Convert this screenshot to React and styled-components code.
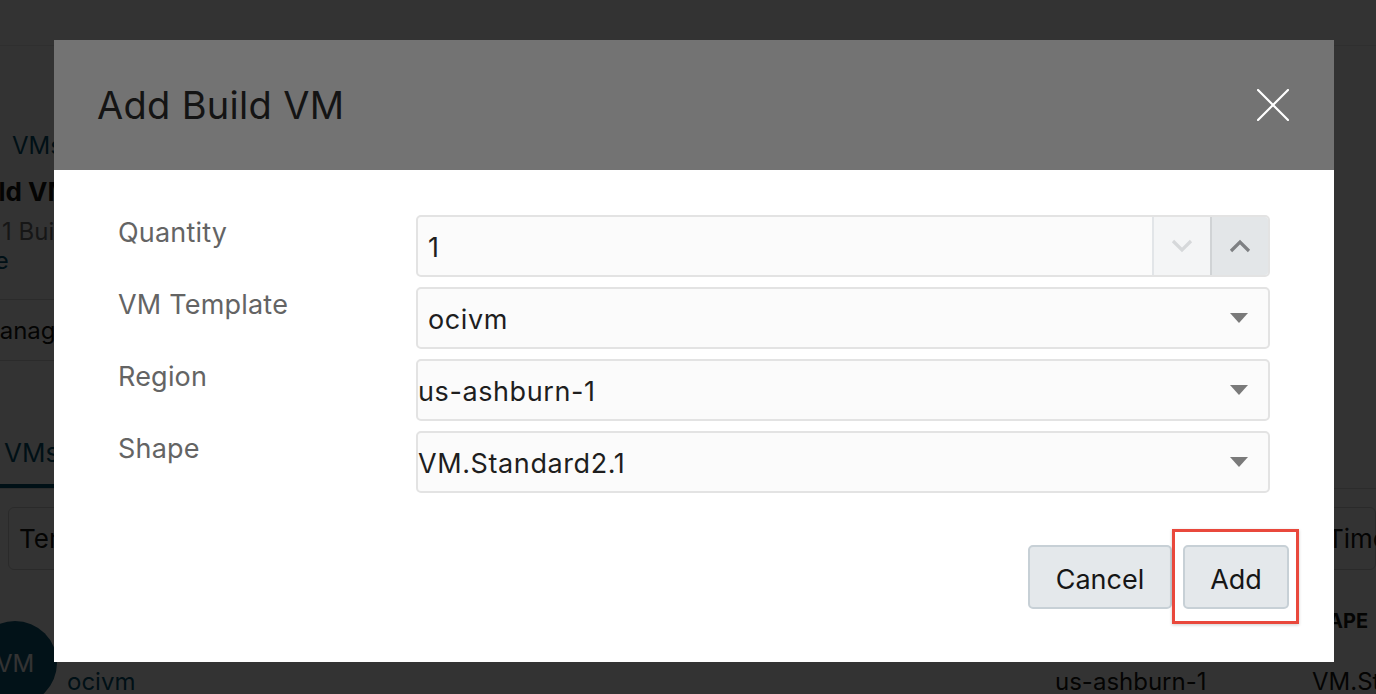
import React from "react";
import styled, { createGlobalStyle } from "styled-components";

const GlobalStyle = createGlobalStyle`
  html, body {
    margin: 0;
    padding: 0;
    width: 1376px;
    height: 694px;
    overflow: hidden;
    background: #ffffff;
    font-family: Inter, "Noto Sans", "Liberation Sans", sans-serif;
  }
  * { box-sizing: border-box; }
`;

/* ---------- page behind the dialog ---------- */

const Page = styled.div`
  position: relative;
  width: 1376px;
  height: 694px;
  overflow: hidden;
  background: #ffffff;
  color: #161513;
`;

const TopBar = styled.div`
  height: 46px;
  border-bottom: 1px solid #e8e8e8;
  overflow: hidden;
`;

const PageTitle = styled.div`
  font-size: 44px;
  line-height: 48px;
  margin-top: -45px;
  margin-left: -160px;
`;

const Side = styled.div`
  display: flex;
  flex-direction: column;
  width: 300px;
`;

const Crumb = styled.div`
  color: #04536f;
  font-size: 24px;
  line-height: 30px;
  margin: 85px 0 0 12px;
  white-space: nowrap;
`;

const SideHeading = styled.div`
  font-size: 26px;
  font-weight: 700;
  line-height: 30px;
  margin: 16px 0 0 -42px;
  white-space: nowrap;
`;

const SideText = styled.div`
  font-size: 24px;
  line-height: 30px;
  margin: 10px 0 0 2px;
  color: #6f6f6f;
  white-space: nowrap;
`;

const SideLink = styled.div`
  font-size: 24px;
  line-height: 28px;
  margin: 0 0 0 -50px;
  color: #04536f;
  white-space: nowrap;
`;

const SideBlock = styled.div`
  margin-top: 24px;
  border-top: 1px solid #d8d8d8;
  border-bottom: 1px solid #d8d8d8;
  height: 62px;
  display: flex;
  align-items: center;
  font-size: 24px;
  margin-left: -22px;
  white-space: nowrap;
  width: 400px;
`;

const Tabs = styled.div`
  margin-top: 76px;
  display: flex;
  border-bottom: 1px solid #dddddd;
  width: 1376px;
`;

const Tab = styled.div`
  color: #04536f;
  font-size: 26px;
  padding: 0 0 16px 4px;
  border-bottom: 4px solid #04536f;
  width: 60px;
  white-space: nowrap;
  overflow: hidden;
`;

const Toolbar = styled.div`
  display: flex;
  justify-content: space-between;
  padding: 18px 0 0 8px;
  width: 1376px;
`;

const FilterBox = styled.div`
  height: 63px;
  border: 1px solid #d0d0d0;
  border-radius: 6px;
  display: flex;
  align-items: center;
  padding: 0 10px;
  font-size: 26px;
  width: ${(p) => p.$w}px;
  white-space: nowrap;
`;

const TableHead = styled.div`
  display: flex;
  justify-content: flex-end;
  font-size: 20px;
  font-weight: 700;
  line-height: 24px;
  margin-top: 39px;
  width: 1376px;
  span {
    width: 64px;
    white-space: nowrap;
    overflow: hidden;
    text-indent: -12px;
  }
`;

const TableRow = styled.div`
  display: flex;
  align-items: flex-start;
  margin-top: -12px;
  width: 1376px;
  font-size: 24px;
`;

const Avatar = styled.div`
  width: 84px;
  height: 84px;
  border-radius: 50%;
  margin-left: -27px;
  background: #0e5a78;
  color: #ffffff;
  display: flex;
  align-items: center;
  justify-content: center;
  font-size: 24px;
  flex: none;
`;

const RowName = styled.div`
  color: #04536f;
  margin-left: 10px;
  margin-top: 46px;
  flex: 1;
`;

const RowCell = styled.div`
  margin-top: 46px;
  width: ${(p) => p.$w}px;
  white-space: nowrap;
  overflow: hidden;
`;

/* ---------- overlay + dialog ---------- */

const Backdrop = styled.div`
  position: absolute;
  inset: 0;
  background: rgba(0, 0, 0, 0.8);
`;

const Dialog = styled.div`
  position: absolute;
  left: 54px;
  top: 40px;
  width: 1280px;
  height: 622px;
  background: #ffffff;
  display: flex;
  flex-direction: column;
`;

const Header = styled.div`
  height: 130px;
  background: #737373;
  display: flex;
  align-items: center;
  justify-content: space-between;
  padding: 0 44px 0 43px;
`;

const Title = styled.h1`
  margin: 0;
  font-size: 38px;
  font-weight: 400;
  color: #141414;
  letter-spacing: 0.3px;
`;

const CloseButton = styled.button`
  width: 34px;
  height: 34px;
  padding: 0;
  border: 0;
  background: transparent;
  display: flex;
  align-items: center;
  justify-content: center;
  cursor: pointer;
`;

const Body = styled.div`
  padding: 45px 64px 0 64px;
  display: flex;
  flex-direction: column;
  gap: 10px;
`;

const FieldRow = styled.div`
  display: grid;
  grid-template-columns: 298px 1fr;
  align-items: start;
`;

const Label = styled.label`
  font-size: 27px;
  line-height: 30px;
  padding-top: 3px;
  color: #646464;
  letter-spacing: 0.2px;
`;

const Control = styled.div`
  height: 62px;
  border: 2px solid #e3e3e3;
  border-radius: 5px;
  background: #fbfbfb;
  display: flex;
  align-items: stretch;
  overflow: hidden;
`;

const Value = styled.div`
  flex: 1;
  display: flex;
  align-items: center;
  padding: 3px 0 0 ${(p) => p.$pad}px;
  font-size: 27px;
  letter-spacing: 0.6px;
  color: #1e1e1e;
`;

const SpinButton = styled.div`
  width: 58px;
  display: flex;
  align-items: center;
  justify-content: center;
  background: ${(p) => (p.$active ? "#e3e6e8" : "#f4f5f6")};
  border-left: 2px solid ${(p) => (p.$active ? "#d0d3d5" : "#e2e5e8")};
`;

const Caret = styled.div`
  width: 58px;
  display: flex;
  align-items: center;
  justify-content: center;
  &::after {
    content: "";
    border-left: 9px solid transparent;
    border-right: 9px solid transparent;
    border-top: 10px solid #7a7a7a;
  }
`;

const Footer = styled.div`
  margin-top: auto;
  padding: 0 45px 53px 0;
  display: flex;
  justify-content: flex-end;
  align-items: center;
  gap: 11px;
`;

const Button = styled.button`
  height: 64px;
  min-width: ${(p) => p.$w}px;
  padding: 4px 20px 0;
  font-family: inherit;
  font-size: 27px;
  color: #161616;
  background: #e4e8eb;
  border: 2px solid #c7d0d6;
  border-radius: 5px;
  cursor: pointer;
`;

const Highlight = styled.div`
  position: relative;
  display: flex;
  &::after {
    content: "";
    position: absolute;
    left: -11px;
    right: -10px;
    top: -16px;
    bottom: -15px;
    border: 3px solid #e9483c;
    pointer-events: none;
    box-shadow: 0 1px 3px rgba(0, 0, 0, 0.2);
  }
`;

const Chevron = ({ up, color }) => (
  <svg width="22" height="14" viewBox="0 0 22 14">
    <path
      d={up ? "M2 12 L11 3 L20 12" : "M2 2 L11 11 L20 2"}
      fill="none"
      stroke={color}
      strokeWidth="3.2"
    />
  </svg>
);

const fields = [
  { label: "Quantity", value: "1", pad: 10, spin: true },
  { label: "VM Template", value: "ocivm", pad: 10 },
  { label: "Region", value: "us-ashburn-1", pad: 0 },
  { label: "Shape", value: "VM.Standard2.1", pad: 0 },
];

export default function App() {
  return (
    <>
      <GlobalStyle />
      <Page>
        <TopBar>
          <PageTitle>Overview</PageTitle>
        </TopBar>
        <Side>
          <Crumb>VMs</Crumb>
          <SideHeading>Build VMs</SideHeading>
          <SideText>1 Build VM</SideText>
          <SideLink>More</SideLink>
          <SideBlock>Manage VMs</SideBlock>
        </Side>
        <Tabs>
          <Tab>VMs</Tab>
        </Tabs>
        <Toolbar>
          <FilterBox $w={200}>Template</FilterBox>
          <FilterBox $w={60}>Time</FilterBox>
        </Toolbar>
        <TableHead>
          <span>SHAPE</span>
        </TableHead>
        <TableRow>
          <Avatar>VM</Avatar>
          <RowName>ocivm</RowName>
          <RowCell $w={257}>us-ashburn-1</RowCell>
          <RowCell $w={64}>VM.Standard2.1</RowCell>
        </TableRow>

        <Backdrop />

        <Dialog>
          <Header>
            <Title>Add Build VM</Title>
            <CloseButton aria-label="Close">
              <svg width="32" height="32" viewBox="0 0 32 32">
                <path
                  d="M1 1 L31 31 M31 1 L1 31"
                  stroke="#ffffff"
                  strokeWidth="2.2"
                  strokeLinecap="round"
                />
              </svg>
            </CloseButton>
          </Header>
          <Body>
            {fields.map((f) => (
              <FieldRow key={f.label}>
                <Label>{f.label}</Label>
                <Control>
                  <Value $pad={f.pad}>{f.value}</Value>
                  {f.spin ? (
                    <>
                      <SpinButton>
                        <Chevron color="#d6d8da" />
                      </SpinButton>
                      <SpinButton $active>
                        <Chevron up color="#7e8083" />
                      </SpinButton>
                    </>
                  ) : (
                    <Caret />
                  )}
                </Control>
              </FieldRow>
            ))}
          </Body>
          <Footer>
            <Button $w={144}>Cancel</Button>
            <Highlight>
              <Button $w={106}>Add</Button>
            </Highlight>
          </Footer>
        </Dialog>
      </Page>
    </>
  );
}
